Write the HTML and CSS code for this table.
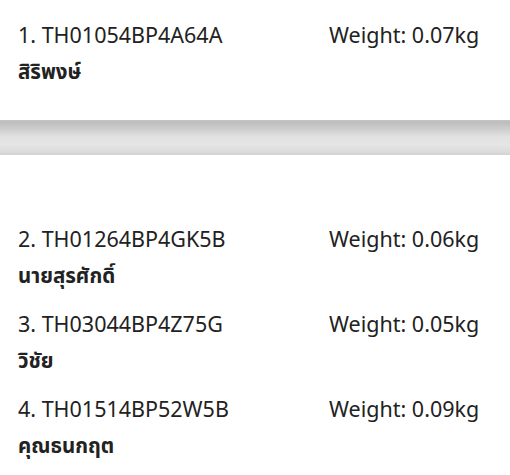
FILE: index.html
```html
<!DOCTYPE html>
<html lang="th">
<head>
<meta charset="utf-8">
<link rel="stylesheet" href="styles.css">
</head>
<body>
<div class="page">
  <section class="group group-first">
    <div class="item">
      <div class="code">1. TH01054BP4A64A</div>
      <div class="weight">Weight: 0.07kg</div>
      <div class="name">สิริพงษ์</div>
    </div>
  </section>
  <div class="divider"></div>
  <section class="group group-second">
    <div class="item">
      <div class="code">2. TH01264BP4GK5B</div>
      <div class="weight">Weight: 0.06kg</div>
      <div class="name">นายสุรศักดิ์</div>
    </div>
    <div class="item">
      <div class="code">3. TH03044BP4Z75G</div>
      <div class="weight">Weight: 0.05kg</div>
      <div class="name">วิชัย</div>
    </div>
    <div class="item">
      <div class="code">4. TH01514BP52W5B</div>
      <div class="weight">Weight: 0.09kg</div>
      <div class="name">คุณธนกฤต</div>
    </div>
  </section>
</div>
</body>
</html>
```

FILE: styles.css
```css
html, body {
  margin: 0;
  padding: 0;
  background: #ffffff;
}

.page {
  width: 510px;
  height: 475px;
  overflow: hidden;
  font-family: "Noto Sans", "Noto Sans Thai", "Leelawadee UI", sans-serif;
  color: #222222;
}

.group {
  display: flex;
  flex-direction: column;
  gap: 15px;
  padding-left: 18px;
}

.group-first {
  padding-top: 17px;
  height: 120px;
  box-sizing: border-box;
}

.group-second {
  padding-top: 66px;
}

.item {
  display: grid;
  grid-template-columns: 311px 1fr;
  grid-template-rows: 35px 35px;
}

.code,
.weight {
  font-size: 21.5px;
  line-height: 35px;
  white-space: nowrap;
}

.name {
  grid-column: 1 / 3;
  font-size: 20.5px;
  font-weight: 700;
  line-height: 38px;
  white-space: nowrap;
}

.divider {
  height: 35px;
  background: linear-gradient(to bottom,
    #c6c6c6 0,
    #bdbdbd 6%,
    #cfcfcf 28%,
    #e2e2e2 48%,
    #e5e5e5 70%,
    #dcdcdc 90%,
    #d2d2d2 100%);
}
```
